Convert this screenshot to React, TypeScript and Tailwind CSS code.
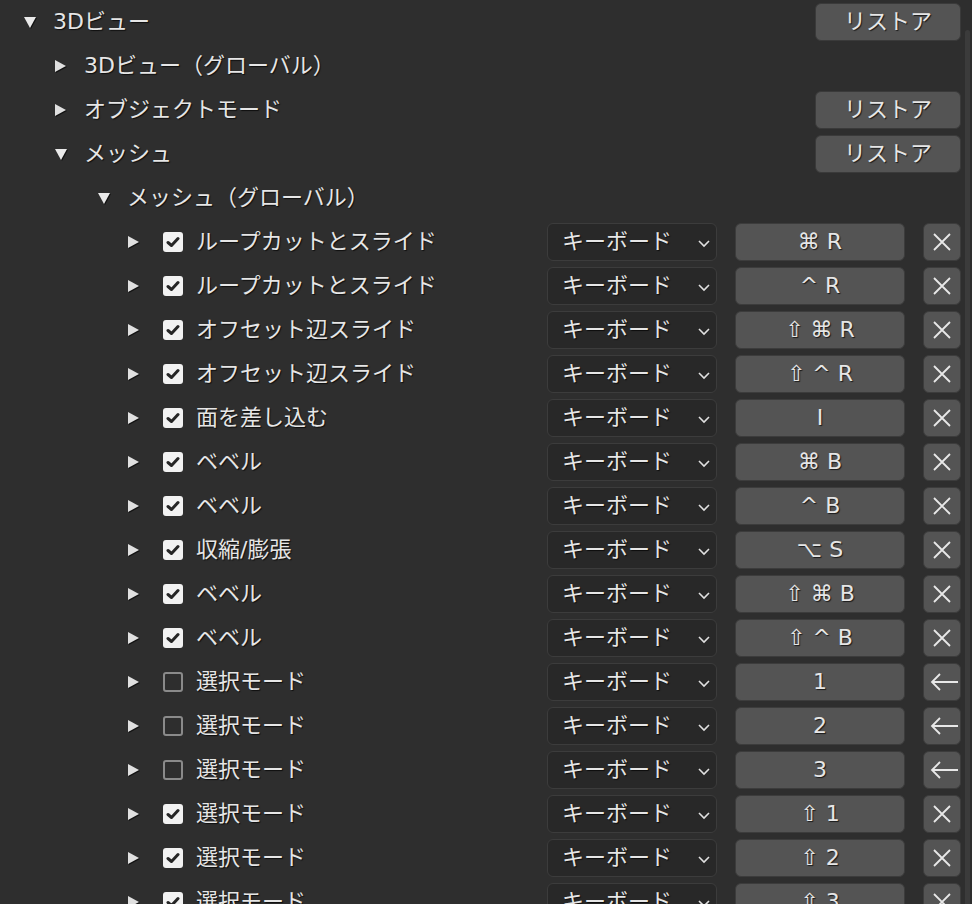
import React from "react";

type Item = { name: string; key: string; on: boolean };

const items: Item[] = [
  { name: "ループカットとスライド", key: "⌘ R", on: true },
  { name: "ループカットとスライド", key: "^ R", on: true },
  { name: "オフセット辺スライド", key: "⇧ ⌘ R", on: true },
  { name: "オフセット辺スライド", key: "⇧ ^ R", on: true },
  { name: "面を差し込む", key: "I", on: true },
  { name: "ベベル", key: "⌘ B", on: true },
  { name: "ベベル", key: "^ B", on: true },
  { name: "収縮/膨張", key: "⌥ S", on: true },
  { name: "ベベル", key: "⇧ ⌘ B", on: true },
  { name: "ベベル", key: "⇧ ^ B", on: true },
  { name: "選択モード", key: "1", on: false },
  { name: "選択モード", key: "2", on: false },
  { name: "選択モード", key: "3", on: false },
  { name: "選択モード", key: "⇧ 1", on: true },
  { name: "選択モード", key: "⇧ 2", on: true },
  { name: "選択モード", key: "⇧ 3", on: true },
];

const shadow = "[text-shadow:1px_1px_1px_rgba(0,0,0,0.7)]";

const Tri = ({ open }: { open: boolean }) =>
  open ? (
    <svg width="12" height="11" viewBox="0 0 12 11" className="drop-shadow-[1px_1px_0_rgba(0,0,0,0.6)]">
      <polygon points="0,0 12,0 6,11" fill="#eaeaea" />
    </svg>
  ) : (
    <svg width="11" height="12" viewBox="0 0 11 12" className="drop-shadow-[1px_1px_0_rgba(0,0,0,0.6)]">
      <polygon points="0,0 11,6 0,12" fill="#e0e0e0" />
    </svg>
  );

const Restore = () => (
  <button className="mr-[11px] flex h-[38px] w-[146px] items-center justify-center rounded-[6px] border border-[#3a3a3a] bg-[#545454] text-[#e6e6e6]">
    <span className={shadow}>リストア</span>
  </button>
);

const Header = ({ level, open, label, restore }: { level: number; open: boolean; label: string; restore?: boolean }) => {
  const pad = ["pl-[24px]", "pl-[55px]", "pl-[55px]", "pl-[98px]"][level];
  return (
    <div className={`flex h-[44px] items-center ${pad}`}>
      <div className="flex w-[29px] items-center">
        <Tri open={open} />
      </div>
      <span className={`flex-1 ${shadow}`}>{label}</span>
      {restore && <Restore />}
    </div>
  );
};

const Check = ({ on }: { on: boolean }) =>
  on ? (
    <div className="flex h-[20px] w-[20px] items-center justify-center rounded-[3px] bg-[#f2f2f2]">
      <svg width="14" height="12" viewBox="0 0 14 12">
        <path d="M2 6.5 L5.5 9.5 L12 2.5" stroke="#262626" strokeWidth="3" fill="none" strokeLinecap="round" strokeLinejoin="round" />
      </svg>
    </div>
  ) : (
    <div className="h-[20px] w-[20px] rounded-[3px] border-2 border-[#8a8a8a]" />
  );

const Row = ({ item }: { item: Item }) => (
  <div className="flex h-[44px] items-center pl-[128px]">
    <div className="flex w-[35px] items-center">
      <Tri open={false} />
    </div>
    <Check on={item.on} />
    <span className={`ml-[13px] flex-1 ${shadow}`}>{item.name}</span>
    <div className="flex h-[38px] w-[170px] items-center justify-between rounded-[6px] border border-[#3c3c3c] bg-[#282828] pl-[14px] pr-[5px]">
      <span className={shadow}>キーボード</span>
      <svg width="14" height="9" viewBox="0 0 14 9" className="mt-[3px]">
        <path d="M2 2 L7 7 L12 2" stroke="#e0e0e0" strokeWidth="1.6" fill="none" />
      </svg>
    </div>
    <div className="ml-[18px] flex h-[38px] w-[170px] items-center justify-center rounded-[6px] border border-[#3c3c3c] bg-[#545454]">
      <span className={shadow}>{item.key}</span>
    </div>
    <div className="ml-[18px] mr-[11px] flex h-[38px] w-[38px] items-center justify-center rounded-[6px] border border-[#3c3c3c] bg-[#545454]">
      {item.on ? (
        <svg width="20" height="20" viewBox="0 0 20 20">
          <path d="M2 2 L18 18 M18 2 L2 18" stroke="#e8e8e8" strokeWidth="1.8" />
        </svg>
      ) : (
        <svg width="28" height="20" viewBox="0 0 28 20" className="ml-[4px]">
          <path d="M2 10 H28 M10 2 L2 10 L10 18" stroke="#e8e8e8" strokeWidth="1.8" fill="none" />
        </svg>
      )}
    </div>
  </div>
);

export default function App() {
  return (
    <div
      className="relative h-[904px] w-[972px] overflow-hidden bg-[#2e2e2e] text-[22px] leading-none text-[#e6e6e6]"
      style={{ fontFamily: '"DejaVu Sans", "Noto Sans CJK JP", sans-serif' }}
    >
      <Header level={0} open label="3Dビュー" restore />
      <Header level={1} open={false} label="3Dビュー（グローバル）" />
      <Header level={2} open={false} label="オブジェクトモード" restore />
      <Header level={2} open label="メッシュ" restore />
      <Header level={3} open label="メッシュ（グローバル）" />
      {items.map((it, i) => (
        <Row key={i} item={it} />
      ))}
      {/* scrollbar */}
      <div className="absolute right-[2px] top-[30px] h-[900px] w-[5px] rounded-full bg-[#3b3b3b]" />
    </div>
  );
}
